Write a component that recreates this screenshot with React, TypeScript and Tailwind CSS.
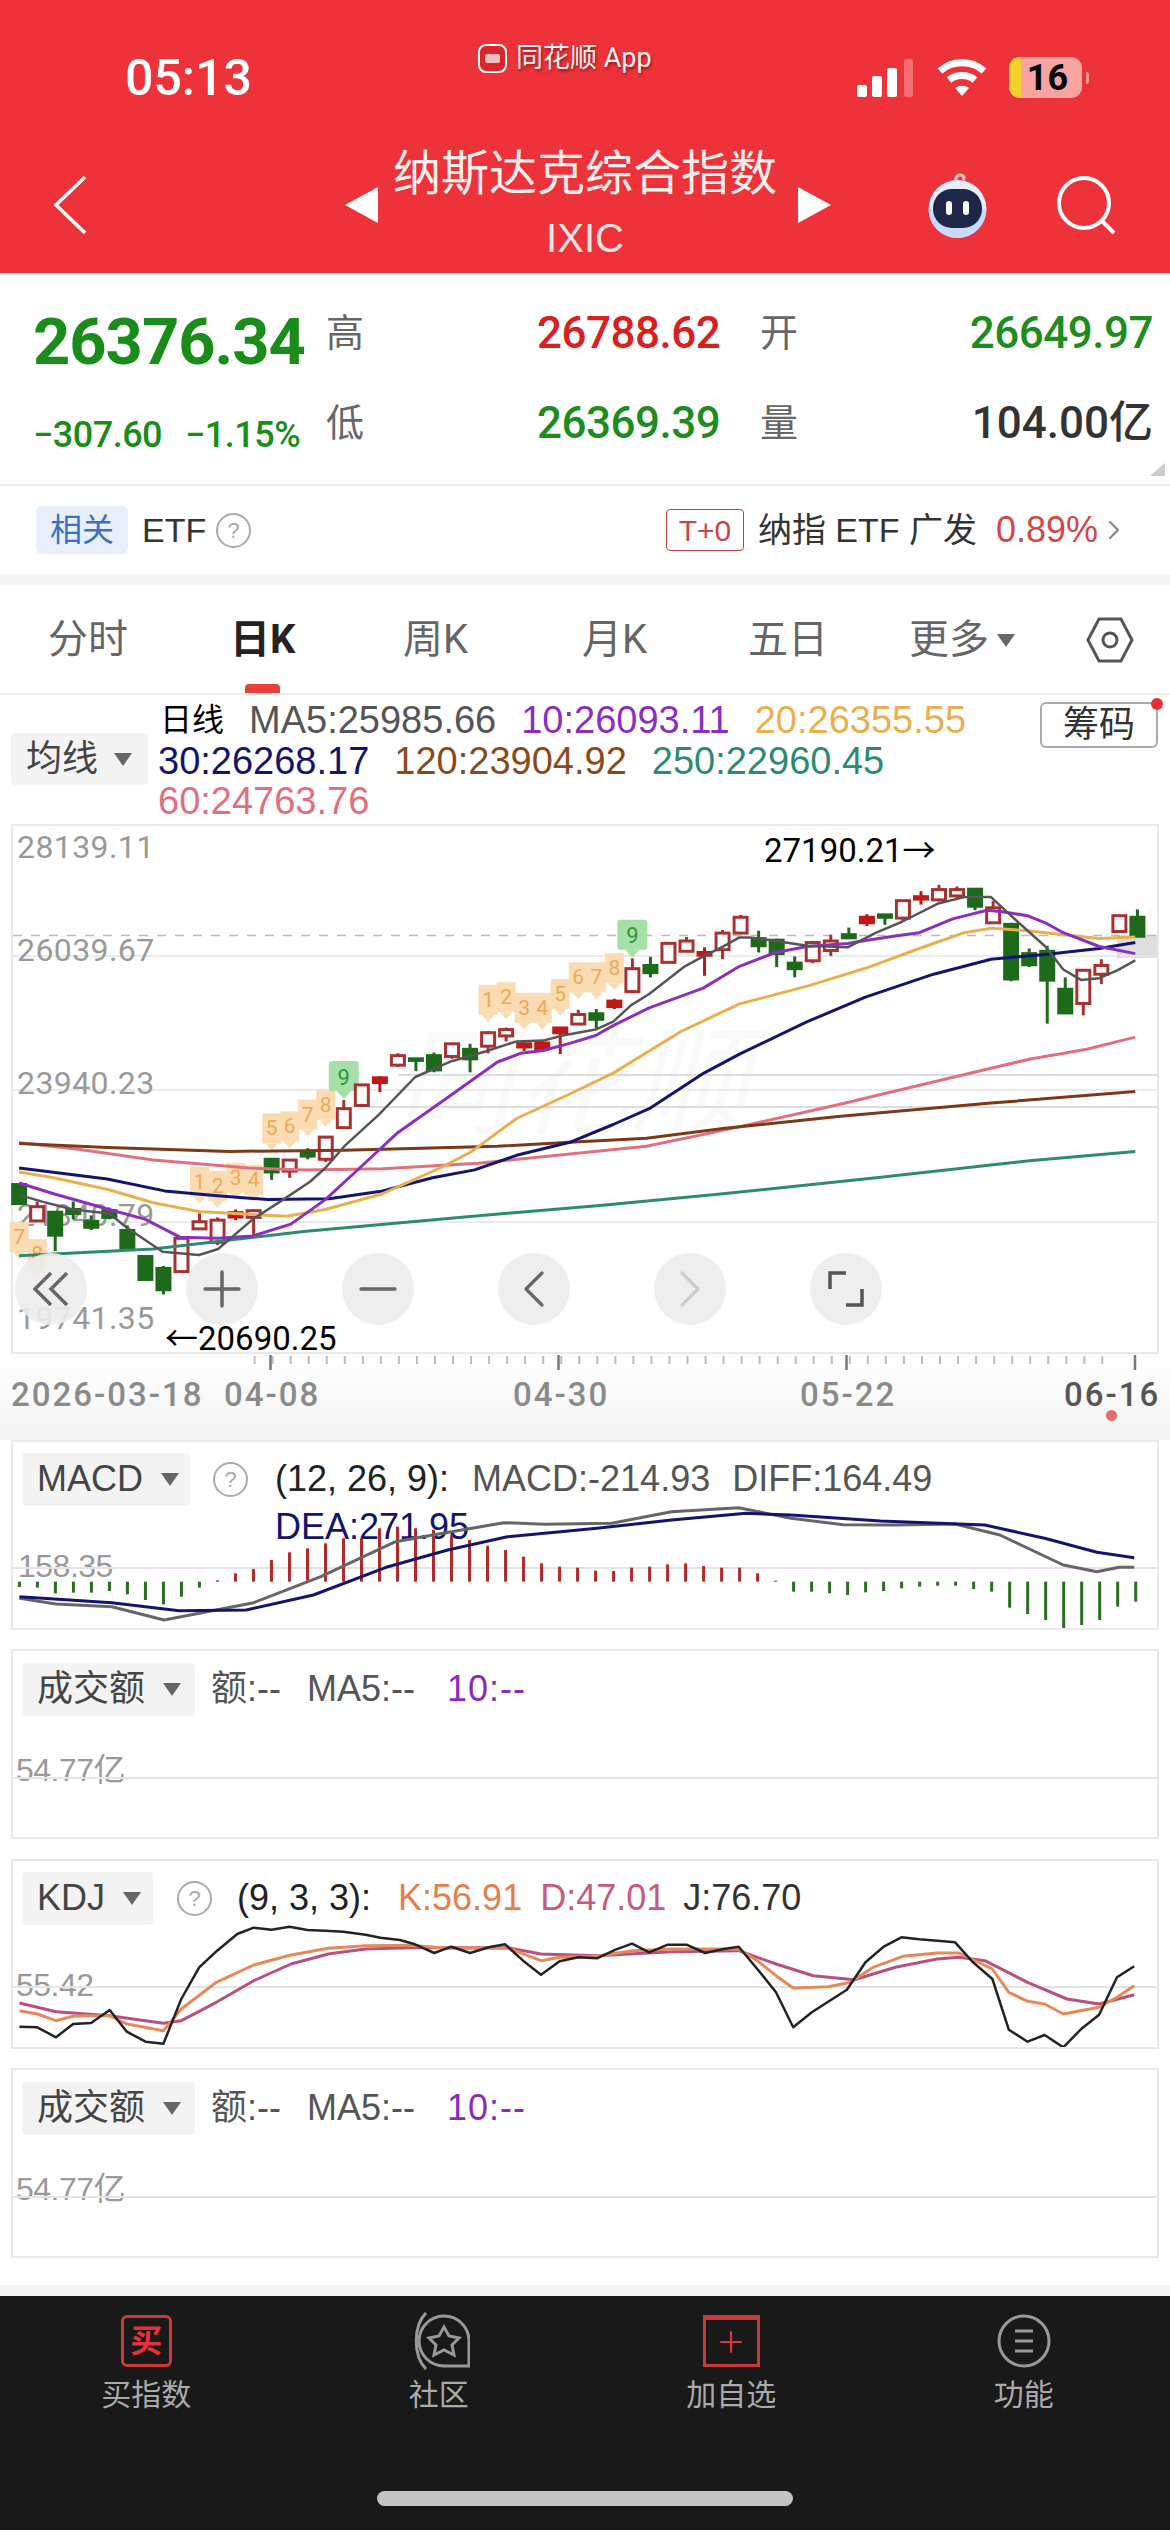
import { ChevronLeft, ChevronRight, Minus, Plus } from "lucide-react";
import type { ReactNode } from "react";

const sans = "font-['Liberation_Sans','Noto_Sans_CJK_SC',sans-serif]";

// chart coords below were read off crops of the screenshot, so map them back to page px
const SCALE_MAIN_X = 2.613;
const SCALE_MAIN_Y = 2.529;
const SCALE_X = 1.3402;

const mapLeft = (s: string) =>
  s
    .split(" ")
    .map((p) => {
      const [x, y] = p.split(",").map(Number);
      return `${(x / SCALE_MAIN_X).toFixed(1)},${(820 + y / SCALE_MAIN_Y).toFixed(1)}`;
    })
    .join(" ");

const mapRight = (s: string) =>
  s
    .split(" ")
    .map((p) => {
      const [x, y] = p.split(",").map(Number);
      return `${(570 + x / SCALE_MAIN_X).toFixed(1)},${(820 + y / SCALE_MAIN_Y).toFixed(1)}`;
    })
    .join(" ");

const mapPanel = (s: string, originY: number) =>
  s
    .split(" ")
    .map((p) => {
      const [x, y] = p.split(",").map(Number);
      return `${(x / SCALE_X).toFixed(1)},${(originY + y / 3).toFixed(1)}`;
    })
    .join(" ");

const mainLines = [
  {
    color: "#2e8b73",
    w: 3,
    a: "50,1102 400,1085 800,1040 1200,1005 1568,975",
    b: "400,945 800,905 1200,862 1477,838",
  },
  {
    color: "#e07080",
    w: 3,
    a: "50,816 200,832 400,860 650,880 800,885 1000,882 1250,868 1489,845",
    b: "200,825 400,785 700,720 1100,628 1200,605 1350,580 1477,549",
  },
  {
    color: "#7a3a1a",
    w: 3,
    a: "50,818 280,828 600,838 900,835 1300,825 1489,815",
    b: "200,805 400,780 700,750 1100,716 1477,687",
  },
  {
    color: "#14146e",
    w: 3,
    a: "50,880 280,908 430,938 560,950 700,960 860,958 1000,938 1130,905 1240,885 1350,848 1489,815",
    b: "113,770 207,730 350,640 443,592 620,510 772,448 950,390 1100,352 1242,340 1383,325 1477,310",
  },
  {
    color: "#e8b050",
    w: 3,
    a: "50,890 140,905 285,935 400,968 520,990 660,998 750,1002 850,985 1000,945 1150,880 1230,840 1350,755 1489,693",
    b: "113,640 290,535 443,465 620,420 772,375 913,325 1030,285 1100,274 1195,280 1289,290 1383,300 1477,296",
  },
  {
    color: "#8a2fc0",
    w: 3,
    a: "50,918 140,945 285,985 380,1010 470,1055 570,1058 660,1052 760,1022 850,960 940,880 1040,790 1180,695 1300,612 1360,590 1420,583 1489,565",
    b: "67,545 113,520 207,475 348,425 443,370 537,335 620,320 725,312 772,305 850,293 913,285 1000,250 1090,228 1130,232 1195,242 1242,260 1289,285 1383,320 1477,338",
  },
  {
    color: "#555555",
    w: 2.5,
    a: "50,948 110,965 190,985 285,995 330,1030 425,1092 520,1100 570,1085 660,1010 740,960 810,915 850,880 900,825 990,745 1085,650 1180,610 1270,585 1350,560 1420,558 1470,545",
    b: "67,530 113,510 160,468 207,440 300,370 348,345 396,322 443,297 470,297 537,306 620,318 725,322 800,285 866,258 960,212 1030,195 1100,195 1150,240 1242,320 1289,378 1336,405 1383,400 1430,380 1477,355",
  },
];

// i, high, bodyTop, bodyBottom, low, r/g
const candles: [number, number, number, number, number, "r" | "g"][] = [
  [0, 922, 922, 970, 970, "g"],
  [1, 965, 978, 1014, 1016, "r"],
  [2, 992, 992, 1050, 1090, "g"],
  [3, 965, 985, 995, 1010, "g"],
  [4, 1000, 1015, 1030, 1037, "g"],
  [5, 980, 988, 1005, 1010, "g"],
  [6, 1025, 1038, 1085, 1088, "g"],
  [7, 1104, 1104, 1162, 1164, "g"],
  [8, 1128, 1134, 1188, 1200, "g"],
  [9, 1058, 1058, 1142, 1144, "r"],
  [10, 995, 1016, 1034, 1034, "r"],
  [11, 1005, 1012, 1068, 1075, "r"],
  [12, 985, 993, 1004, 1012, "r"],
  [13, 985, 988, 1005, 1050, "r"],
  [14, 855, 858, 890, 910, "g"],
  [15, 858, 860, 888, 905, "r"],
  [16, 830, 840, 850, 858, "g"],
  [17, 800, 802, 858, 865, "r"],
  [18, 708, 730, 778, 780, "r"],
  [19, 670, 670, 722, 724, "r"],
  [20, 648, 652, 664, 688, "r"],
  [21, 590, 596, 620, 625, "r"],
  [22, 604, 604, 608, 635, "g"],
  [23, 588, 596, 632, 638, "g"],
  [24, 564, 566, 598, 604, "r"],
  [25, 566, 580, 604, 638, "g"],
  [26, 534, 538, 572, 590, "r"],
  [27, 525, 530, 546, 560, "r"],
  [28, 562, 566, 574, 584, "r"],
  [29, 560, 564, 578, 585, "r"],
  [30, 524, 526, 538, 592, "r"],
  [31, 480, 492, 516, 516, "r"],
  [32, 478, 490, 504, 526, "g"],
  [33, 452, 458, 472, 478, "r"],
  [34, 350, 376, 434, 438, "r"],
  [35, 346, 368, 386, 398, "g"],
  [36, 312, 312, 360, 362, "r"],
  [37, 296, 306, 332, 332, "r"],
  [38, 322, 335, 342, 394, "r"],
  [39, 278, 286, 328, 352, "r"],
  [40, 240, 246, 286, 286, "r"],
  [41, 280, 300, 318, 335, "g"],
  [42, 300, 304, 338, 372, "g"],
  [43, 345, 362, 376, 398, "g"],
  [44, 306, 310, 356, 362, "r"],
  [45, 290, 306, 330, 344, "r"],
  [46, 272, 290, 298, 300, "g"],
  [47, 238, 246, 260, 268, "r"],
  [48, 240, 240, 246, 265, "g"],
  [49, 204, 204, 248, 258, "r"],
  [50, 180, 194, 200, 214, "r"],
  [51, 164, 176, 202, 206, "r"],
  [52, 168, 176, 192, 198, "r"],
  [53, 172, 175, 218, 228, "g"],
  [54, 205, 222, 260, 262, "r"],
  [55, 260, 264, 402, 408, "g"],
  [56, 325, 338, 366, 372, "g"],
  [57, 318, 332, 405, 515, "g"],
  [58, 398, 428, 488, 490, "g"],
  [59, 378, 380, 464, 494, "r"],
  [60, 352, 368, 390, 415, "r"],
  [61, 242, 242, 282, 284, "r"],
  [62, 226, 246, 294, 296, "g"],
];

// TD sequence markers: i, y of the digit, digit
const tdMarks: [number, number, string][] = [
  [0, 1055, "7"],
  [1, 1098, "8"],
  [10, 915, "1"],
  [11, 925, "2"],
  [12, 905, "3"],
  [13, 910, "4"],
  [14, 780, "5"],
  [15, 775, "6"],
  [16, 745, "7"],
  [17, 720, "8"],
  [26, 455, "1"],
  [27, 448, "2"],
  [28, 475, "3"],
  [29, 475, "4"],
  [30, 440, "5"],
  [31, 398, "6"],
  [32, 398, "7"],
  [33, 375, "8"],
];

const cx = (i: number) => (50 + 47.13 * i) / SCALE_MAIN_X;
const zy = (y: number) => 820 + y / SCALE_MAIN_Y;

const macdBars = [
  -16, -18, -35, -33, -33, -28, -38, -55, -68, -45, -18, 4, 25, 38, 65, 88, 100, 115, 130, 130, 160, 165, 160, 155, 140,
  125, 108, 95, 75, 55, 45, 42, 33, 32, 42, 45, 52, 55, 47, 42, 42, 25, 3, -30, -30, -35, -40, -32, -28, -20, -15, -12,
  -12, -22, -30, -78, -97, -115, -140, -130, -115, -75, -60,
];

const yLabels: [number, string][] = [
  [847, "28139.11"],
  [950, "26039.67"],
  [1083, "23940.23"],
  [1215, "21840.79"],
  [1318, "19741.35"],
];

const Caret = ({ className = "" }: { className?: string }) => (
  <svg width="18" height="13" viewBox="0 0 18 13" className={className}>
    <path d="M0 0h18L9 13z" fill="#666" />
  </svg>
);

const Help = () => (
  <span className="flex h-[35px] w-[35px] items-center justify-center rounded-full border-2 border-[#aaaaaa] text-[22px] text-[#aaaaaa]">
    ?
  </span>
);

const MainChart = () => (
  <svg width="1144" height="528" viewBox="13 826 1144 528" className="block overflow-visible">
    <text x="395" y="1125" fontSize="118" fontStyle="italic" fill="#f9f9f9" className="font-['Noto_Sans_CJK_SC']">
      同花顺
    </text>
    <rect x="1117" y="935" width="40" height="23" fill="#dedede" />
    <line x1="398" x2="1157" y1="1075" y2="1075" stroke="#dddddd" strokeWidth="2" />
    <line x1="368" x2="1157" y1="1107" y2="1107" stroke="#dddddd" strokeWidth="2" />
    {[956, 1090, 1222].map((y) => (
      <line key={y} x1="13" x2="1157" y1={y} y2={y} stroke="#e4e4e4" strokeWidth="1.5" />
    ))}
    <line x1="13" x2="1157" y1="935.5" y2="935.5" stroke="#bbbbbb" strokeWidth="1.5" strokeDasharray="9 9" />
    <line x1="13" x2="1157" y1="1353" y2="1353" stroke="#e8e8e8" strokeWidth="2" />
    {yLabels.map(([y, label]) => (
      <text key={label} x="17" y={y} dominantBaseline="central" fontSize="32" letterSpacing="0.4" fill="#999999">
        {label}
      </text>
    ))}

    {tdMarks.map(([i, y, digit]) => (
      <g key={`${i}-${digit}`}>
        <rect x={cx(i) - 9.5} y={zy(y) - 15} width="19" height="30" fill="#fbdcb2" />
        <path d={`M${cx(i) - 6} ${zy(y) + 15}h12l-6 7z`} fill="#fbdcb2" />
      </g>
    ))}
    {tdMarks.map(([i, y, digit]) => (
      <text
        key={`t${i}-${digit}`}
        x={cx(i)}
        y={zy(y)}
        textAnchor="middle"
        dominantBaseline="central"
        fontSize="21"
        fill="#eaa956"
      >
        {digit}
      </text>
    ))}
    {[
      [18, 650],
      [34, 293],
    ].map(([i, y]) => (
      <g key={i}>
        <rect x={cx(i) - 15} y={zy(y) - 16} width="30" height="30" rx="3" fill="#a6e0a6" />
        <path d={`M${cx(i) - 7} ${zy(y) + 14}h14l-7 8z`} fill="#a6e0a6" />
        <text x={cx(i)} y={zy(y)} textAnchor="middle" dominantBaseline="central" fontSize="22" fill="#2a9a3a">
          9
        </text>
      </g>
    ))}

    {candles.map(([i, high, top, bottom, low, dir]) => {
      const x = cx(i);
      const h = zy(bottom) - zy(top);
      const color = dir === "r" ? (h < 6 ? "#c01818" : "#a83232") : "#1d6a1a";
      const solid = dir === "g" || h < 6;
      return (
        <g key={i}>
          <line x1={x} x2={x} y1={zy(high)} y2={zy(low)} stroke={color} strokeWidth="3" />
          <rect
            x={x - 6.5}
            y={zy(top)}
            width="13"
            height={h}
            fill={solid ? color : "#ffffff"}
            stroke={color}
            strokeWidth="3"
          />
        </g>
      );
    })}

    {mainLines.map((l) => (
      <polyline
        key={l.color}
        points={`${mapLeft(l.a)} ${mapRight(l.b)}`}
        fill="none"
        stroke={l.color}
        strokeWidth={l.w}
        strokeLinejoin="round"
      />
    ))}

    <text x="165" y="1338" dominantBaseline="central" fontSize="33" fill="#000000">
      ←20690.25
    </text>
    <text x="764" y="850" dominantBaseline="central" fontSize="33" fill="#000000">
      27190.21→
    </text>
  </svg>
);

const ChartButton = ({ children, className = "" }: { children?: ReactNode; className?: string }) => (
  <div className={`flex h-[72px] w-[72px] items-center justify-center rounded-full bg-[#ececec]/90 ${className}`}>
    {children}
  </div>
);

const ChartControls = () => (
  <div className="absolute left-[2px] top-[427px] flex gap-[84px]">
    <ChartButton className="mr-[15px]">
      <svg width="36" height="34" viewBox="0 0 36 34" fill="none" stroke="#666" strokeWidth="3.5">
        <path d="M18 1 2 17l16 16M34 1 18 17l16 16" />
      </svg>
    </ChartButton>
    <ChartButton>
      <Plus size={58} strokeWidth={1.45} color="#666" />
    </ChartButton>
    <ChartButton>
      <Minus size={58} strokeWidth={1.45} color="#666" />
    </ChartButton>
    <ChartButton>
      <ChevronLeft size={64} strokeWidth={1.2} color="#666" />
    </ChartButton>
    <ChartButton>
      <ChevronRight size={64} strokeWidth={1.2} color="#cccccc" />
    </ChartButton>
    <ChartButton>
      <svg width="36" height="36" viewBox="0 0 36 36" fill="none" stroke="#555" strokeWidth="3.5">
        <path d="M2 18V2h16M34 18v16H18" />
      </svg>
    </ChartButton>
  </div>
);

const DateAxis = () => {
  const ticks = Array.from({ length: 48 }, (_, k) => 13 + k);
  return (
    <div className="h-[86px] bg-gradient-to-b from-white to-[#f3f3f3]">
      <svg width="1170" height="22" viewBox="0 1354 1170 22" className="block">
        {ticks.map((i) => (
          <line key={i} x1={cx(i) + 1} x2={cx(i) + 1} y1="1356" y2="1364" stroke="#bbbbbb" strokeWidth="2" />
        ))}
        {[270.5, 558.5, 846.5, 1135].map((x) => (
          <line key={x} x1={x} x2={x} y1="1355" y2="1370" stroke="#777777" strokeWidth="2.5" />
        ))}
      </svg>
      <div className="flex h-[38px] items-center text-[33px] font-medium tracking-[2px] text-[#8a8a8a]">
        <span className="ml-[11px] w-[213px] whitespace-nowrap">2026-03-18</span>
        <span className="w-[289px]">04-08</span>
        <span className="w-[287px]">04-30</span>
        <span className="w-[264px]">05-22</span>
        <span className="text-[#555555]">06-16</span>
      </div>
      <div className="-mt-[4px] ml-[1106px] h-[11px] w-[11px] rounded-full bg-[#e86a6a]" />
    </div>
  );
};

const Panel = ({ svgBox, lines, children }: { svgBox: string; lines?: ReactNode; children: ReactNode }) => (
  <section className="relative mx-[11px] h-[190px] border-2 border-[#e8e8e8]">
    {children}
    {lines && (
      <svg width="1144" height="186" viewBox={svgBox} className="absolute inset-0">
        {lines}
      </svg>
    )}
  </section>
);

const Chip = ({ label, className }: { label: string; className: string }) => (
  <div className={`flex h-[53px] items-center rounded-[4px] bg-[#f3f3f3] pl-[15px] text-[36px] text-[#444444] ${className}`}>
    <span>{label}</span>
    <Caret className="ml-[18px]" />
  </div>
);

const VolumePanel = ({ originY }: { originY: number }) => (
  <Panel
    svgBox={`13 ${originY} 1144 186`}
    lines={<line x1="13" x2="1157" y1={originY + 127} y2={originY + 127} stroke="#e4e4e4" strokeWidth="2" />}
  >
    <div className={`flex items-center pl-[9px] pt-[11px] ${sans}`}>
      <Chip label="成交额" className="w-[173px]" />
      <span className="ml-[16px] text-[36px] text-[#555555]">额:--</span>
      <span className="ml-[26px] text-[36px] text-[#555555]">MA5:--</span>
      <span className="ml-[32px] text-[36px] tracking-[1px] text-[#8a2bc0]">10:--</span>
    </div>
    <div className={`mt-[30px] pl-[3px] text-[32px] tracking-[-0.5px] text-[#999999] ${sans}`}>54.77亿</div>
  </Panel>
);

const macdDiff =
  "26,535 75,552 150,560 220,600 340,548 430,470 530,365 580,345 675,308 730,313 820,310 900,275 990,263 1060,295 1130,314 1200,315 1280,312 1340,345 1425,435 1470,455 1500,442 1520,442";
const macdDea =
  "26,530 150,548 240,572 330,570 420,525 520,440 600,390 680,350 800,325 900,300 1000,280 1060,285 1180,303 1320,315 1400,355 1470,397 1520,413";

const kdjJ =
  "26,563 50,565 75,595 98,555 122,552 147,513 170,578 195,608 219,614 243,480 267,385 291,335 318,285 340,266 364,272 388,263 412,273 436,275 460,278 490,287 510,296 536,303 556,316 582,342 605,323 630,342 655,325 677,316 701,365 725,407 750,367 775,355 800,358 825,332 847,314 870,340 895,317 920,317 945,342 970,330 990,323 1015,390 1040,460 1063,565 1088,520 1135,452 1160,370 1185,322 1208,295 1232,301 1256,305 1280,310 1304,370 1330,420 1352,572 1377,608 1400,588 1425,625 1449,570 1473,527 1497,415 1520,382";
const kdjK =
  "26,515 50,525 75,545 98,532 122,530 147,530 170,555 219,575 243,510 290,430 340,378 390,348 440,328 490,320 550,319 600,328 680,327 725,365 750,355 800,352 847,335 900,330 990,330 1015,365 1040,410 1063,447 1110,443 1140,430 1170,385 1210,352 1256,342 1285,342 1330,390 1352,460 1377,487 1400,495 1425,525 1473,505 1497,475 1520,440";
const kdjD =
  "26,492 75,518 147,530 219,553 243,545 290,490 340,425 390,375 440,345 490,330 550,326 680,326 725,345 800,350 900,338 990,335 1040,375 1090,410 1145,422 1200,385 1256,360 1285,355 1320,365 1377,430 1430,480 1473,495 1520,467";

const MacdPanel = () => (
  <Panel
    svgBox="13 1442 1144 186"
    lines={
      <>
        <line x1="13" x2="1157" y1="1568" y2="1568" stroke="#e4e4e4" strokeWidth="2" />
        {macdBars.map((v, i) => {
          const x = (26 + 24.13 * i) / SCALE_X;
          const zero = 1420 + 485 / 3;
          return (
            <line
              key={i}
              x1={x}
              x2={x}
              y1={zero}
              y2={zero - v / 3}
              stroke={v > 0 ? "#b22a2a" : "#2a6e1f"}
              strokeWidth="3"
            />
          );
        })}
        <polyline points={mapPanel(macdDiff, 1420)} fill="none" stroke="#666666" strokeWidth="3" strokeLinejoin="round" />
        <polyline points={mapPanel(macdDea, 1420)} fill="none" stroke="#14146e" strokeWidth="3" strokeLinejoin="round" />
      </>
    }
  >
    <div className={`flex items-center pl-[9px] pt-[10px] ${sans}`}>
      <Chip label="MACD" className="w-[168px]" />
      <span className="ml-[23px]">
        <Help />
      </span>
      <span className="ml-[27px] text-[36px] text-[#222222]">(12, 26, 9):</span>
      <span className="ml-[23px] text-[36px] text-[#555555]">MACD:-214.93</span>
      <span className="ml-[22px] text-[36px] text-[#555555]">DIFF:164.49</span>
    </div>
    <div className={`ml-[262px] mt-[1px] text-[36px] leading-[40px] text-[#14146e] ${sans}`}>DEA:271.95</div>
    <div className={`absolute left-[5px] top-[100px] text-[32px] tracking-[-0.5px] text-[#999999] ${sans}`}>158.35</div>
  </Panel>
);

const KdjPanel = () => (
  <Panel
    svgBox="13 1862 1144 186"
    lines={
      <>
        <line x1="13" x2="1157" y1="1988" y2="1988" stroke="#e4e4e4" strokeWidth="2" />
        <polyline points={mapPanel(kdjD, 1840)} fill="none" stroke="#b85080" strokeWidth="3" strokeLinejoin="round" />
        <polyline points={mapPanel(kdjK, 1840)} fill="none" stroke="#e58a5a" strokeWidth="3" strokeLinejoin="round" />
        <polyline points={mapPanel(kdjJ, 1840)} fill="none" stroke="#222222" strokeWidth="2.5" strokeLinejoin="round" />
      </>
    }
  >
    <div className={`flex items-center pl-[9px] pt-[10px] ${sans}`}>
      <Chip label="KDJ" className="w-[131px]" />
      <span className="ml-[24px]">
        <Help />
      </span>
      <span className="ml-[25px] text-[36px] text-[#222222]">(9, 3, 3):</span>
      <span className="ml-[27px] text-[36px] text-[#e57f50]">K:56.91</span>
      <span className="ml-[18px] text-[36px] text-[#c85a80]">D:47.01</span>
      <span className="ml-[17px] text-[36px] text-[#333333]">J:76.70</span>
    </div>
    <div className={`absolute left-[3px] top-[100px] text-[32px] tracking-[-0.5px] text-[#999999] ${sans}`}>55.42</div>
  </Panel>
);

const Robot = () => (
  <svg width="71" height="66" viewBox="0 0 71 66">
    <path d="M34 12c-1-5 0-9 4-9s5 3 3 5" fill="none" stroke="#f6c6c6" strokeWidth="3" />
    <circle cx="35.5" cy="37" r="29" fill="#e8edff" />
    <path d="M6.5 37a29 29 0 0 0 58 0z" fill="#bcd0ff" opacity="0.7" />
    <rect x="11" y="17" width="49" height="39" rx="19" fill="#1e2748" />
    <rect x="24" y="29" width="6" height="14" rx="3" fill="#ffffff" />
    <rect x="41" y="29" width="6" height="14" rx="3" fill="#ffffff" />
  </svg>
);

const StatusBar = () => (
  <div className="flex h-[137px] items-start pl-[125px] pt-[48px] text-white">
    <div className="w-[353px] text-[50px] font-medium leading-[60px]">05:13</div>
    <div className="-mt-[20px] flex h-[60px] w-[379px] items-center">
      <span className="flex h-[29px] w-[29px] items-center justify-center rounded-[8px] border-2 border-white bg-[#d9252b]">
        <span className="h-[9px] w-[15px] rounded-[2px] bg-white/70" />
      </span>
      <span className="ml-[9px] text-[27px] text-[#f3f3f3] [text-shadow:1px_2px_3px_rgba(90,0,0,0.6)]">同花顺 App</span>
    </div>
    <svg width="57" height="38" viewBox="0 0 57 38" className="mt-[11px]">
      <rect x="0" y="26" width="10" height="12" rx="2" fill="#ffffff" />
      <rect x="15" y="17" width="10" height="21" rx="2" fill="#ffffff" />
      <rect x="30" y="9" width="10" height="29" rx="2" fill="#ffffff" />
      <rect x="47" y="0" width="9" height="38" rx="2" fill="#ffffff" opacity="0.3" />
    </svg>
    <svg width="50" height="38" viewBox="0 0 50 38" fill="none" stroke="#ffffff" strokeWidth="7" className="ml-[23px] mt-[11px]">
      <path d="M3 12c12-11 32-11 44 0" />
      <path d="M12 21c7-6 19-6 26 0" />
      <path d="M25 37l-7-8c4-3 10-3 14 0z" fill="#ffffff" stroke="none" />
    </svg>
    <div className="relative ml-[22px] mt-[9px] flex h-[41px] w-[73px] items-center justify-center overflow-hidden rounded-[11px] bg-[#f9a3a3] text-[36px] font-bold leading-none text-black">
      <span className="absolute left-0 top-0 h-full w-[12px] bg-[#f5cf2c]" />
      <span className="relative ml-[4px]">16</span>
    </div>
    <div className="ml-[4px] mt-[24px] h-[12px] w-[3px] rounded-r bg-white/50" />
  </div>
);

const NavBar = () => (
  <div className="flex h-[136px] items-center pl-[54px] text-white">
    <svg width="32" height="58" viewBox="0 0 32 58" fill="none" stroke="#ffffff" strokeWidth="3.5">
      <path d="M31 1 2 29l29 28" />
    </svg>
    <svg width="33" height="36" viewBox="0 0 33 36" className="ml-[259px]">
      <path d="M33 0v36L0 18z" fill="#ffffff" />
    </svg>
    <div className="ml-[16px] mt-[2px] flex w-[382px] flex-col items-center">
      <span className="whitespace-nowrap text-[48px] leading-[64px] text-[#fdeeee]">纳斯达克综合指数</span>
      <span className={`text-[40px] leading-[64px] text-[#fde4e4] ${sans}`}>IXIC</span>
    </div>
    <svg width="33" height="36" viewBox="0 0 33 36" className="ml-[22px]">
      <path d="M0 0v36l33-18z" fill="#ffffff" />
    </svg>
    <div className="ml-[91px]">
      <Robot />
    </div>
    <svg width="60" height="58" viewBox="0 0 60 58" fill="none" stroke="#ffffff" strokeWidth="4" className="ml-[63px]">
      <circle cx="28" cy="27" r="25" />
      <path d="M46 45l12 12" />
    </svg>
  </div>
);

const QuoteGrid = () => (
  <section className="relative flex h-[211px] bg-white">
    <div className="w-[326px] pl-[33px] pt-[34px] text-[#1a8c1a]">
      <div className="text-[65px] font-bold leading-[70px] tracking-[-1px]">26376.34</div>
      <div className="mt-[38px] flex text-[36px] font-medium leading-[40px] tracking-[-0.5px]">
        <span className="w-[152px]">−307.60</span>
        <span>−1.15%</span>
      </div>
    </div>
    <div className="grid w-[434px] grid-cols-[211px_1fr] grid-rows-[90px_90px] items-center pt-[15px] text-[38px] text-[#666666]">
      <span>高</span>
      <span className="text-[44px] font-medium tracking-[-0.5px] text-[#d8201f]">26788.62</span>
      <span>低</span>
      <span className="text-[44px] font-medium tracking-[-0.5px] text-[#1f8c1f]">26369.39</span>
    </div>
    <div className="grid w-[393px] grid-cols-[auto_1fr] grid-rows-[90px_90px] items-center pt-[15px] text-[38px] text-[#666666]">
      <span>开</span>
      <span className="text-right text-[44px] font-medium tracking-[-0.5px] text-[#1f8c1f]">26649.97</span>
      <span>量</span>
      <span className="text-right text-[44px] font-medium text-[#333333]">104.00亿</span>
    </div>
    <svg width="15" height="13" viewBox="0 0 15 13" className="absolute bottom-[8px] right-[5px]">
      <path d="M15 0v13H0z" fill="#cccccc" />
    </svg>
  </section>
);

const EtfRow = () => (
  <section className={`flex h-[90px] items-center border-t-2 border-[#eeeeee] bg-white pl-[36px] pr-[40px] ${sans}`}>
    <span className="flex h-[48px] w-[92px] items-center justify-center rounded-[6px] bg-[#e8effa] text-[32px] text-[#3a6fc4]">
      相关
    </span>
    <span className="ml-[14px] text-[34px] text-[#333333]">ETF</span>
    <span className="ml-[10px]">
      <Help />
    </span>
    <span className="ml-auto flex h-[42px] w-[78px] items-center justify-center rounded-[4px] border border-[#c04040] text-[30px] text-[#c44848]">
      T+0
    </span>
    <span className="ml-[14px] w-[238px] text-[34px] text-[#333333]">纳指 ETF 广发</span>
    <span className="text-[36px] text-[#d44848]">0.89%</span>
    <ChevronRight size={32} strokeWidth={1.6} color="#888888" />
  </section>
);

const Tabs = () => (
  <section className="bg-white">
    <div className="flex h-[99px] items-center pl-[48px] pt-[11px] text-[40px] text-[#666666]">
      <span className="w-[182px]">分时</span>
      <span className="w-[173px] font-bold text-[#222222]">日K</span>
      <span className="w-[179px]">周K</span>
      <span className="w-[166px]">月K</span>
      <span className="w-[161px]">五日</span>
      <span className="flex w-[177px] items-center">
        更多
        <Caret className="ml-[8px]" />
      </span>
      <svg width="48" height="46" viewBox="0 0 48 46" fill="none" stroke="#555555" strokeWidth="3">
        <path d="M13 2h22l11 21-11 21H13L2 23z" />
        <circle cx="24" cy="23" r="7" />
      </svg>
    </div>
    <div className="ml-[245px] h-[9px] w-[35px] rounded-t-[4px] bg-[#e8403a]" />
    <div className="h-[2px] bg-[#eeeeee]" />
  </section>
);

const MaLegend = () => (
  <section className={`flex h-[129px] bg-white pl-[11px] ${sans}`}>
    <div className="mt-[38px] flex h-[52px] w-[137px] items-center rounded-[4px] bg-[#f3f3f3] pl-[15px] text-[36px] text-[#444444]">
      均线
      <Caret className="ml-[16px]" />
    </div>
    <div className="ml-[10px] w-[882px] pt-[5px] text-[38px] leading-[40.5px]">
      <div className="flex gap-[25px] whitespace-nowrap">
        <span className="pl-[2px] text-[32px] text-black">日线</span>
        <span className="text-[#555555]">MA5:25985.66</span>
        <span className="text-[#8a2fc0]">10:26093.11</span>
        <span className="text-[#e8b050]">20:26355.55</span>
      </div>
      <div className="flex gap-[25px] whitespace-nowrap">
        <span className="text-[#14146e]">30:26268.17</span>
        <span className="text-[#8a4a20]">120:23904.92</span>
        <span className="text-[#2e8b73]">250:22960.45</span>
      </div>
      <div className="text-[#e07080]">60:24763.76</div>
    </div>
    <div className="relative mt-[7px] flex h-[46px] w-[118px] items-center justify-center rounded-[6px] border-2 border-[#aaaaaa] text-[36px] text-[#333333]">
      筹码
      <span className="absolute -right-[7px] -top-[6px] h-[12px] w-[12px] rounded-full bg-[#e6303a]" />
    </div>
  </section>
);

const navItems = ["买指数", "社区", "加自选", "功能"];

const NavIcon = ({ index }: { index: number }) => {
  if (index === 0) {
    return (
      <span className="flex h-[52px] w-[51px] items-center justify-center rounded-[6px] border-[3px] border-[#c93a3a] text-[32px] font-bold leading-none text-[#e8303a]">
        买
      </span>
    );
  }
  if (index === 1) {
    return (
      <svg width="62" height="58" viewBox="0 0 62 58" fill="none" stroke="#999999" strokeWidth="3">
        <path d="M18 1C5 14 5 44 18 57" />
        <path d="M61 54V28a25 25 0 1 0-25 26z" />
        <path d="M36 15l5 9 10 2-7 7 2 10-10-5-10 5 2-10-7-7 10-2z" />
      </svg>
    );
  }
  if (index === 2) {
    return (
      <span className="flex h-[52px] w-[57px] items-center justify-center border-[3px] border-t-[5px] border-[#c93a3a] text-[#e8303a]">
        <Plus size={34} strokeWidth={1.5} />
      </span>
    );
  }
  return (
    <svg width="54" height="54" viewBox="0 0 54 54" fill="none" stroke="#999999" strokeWidth="3">
      <circle cx="27" cy="27" r="25" />
      <path d="M18 17h18M18 27h18M18 37h18" />
    </svg>
  );
};

const Footer = () => (
  <footer className="h-[234px] bg-[#191919] pt-[19px]">
    <div className="grid grid-cols-4">
      {navItems.map((label, i) => (
        <div key={label} className="flex flex-col items-center">
          <div className="flex h-[52px] items-center">
            <NavIcon index={i} />
          </div>
          <span className="mt-[13px] text-[30px] leading-[30px] text-[#aaaaaa]">{label}</span>
        </div>
      ))}
    </div>
    <div className="ml-[377px] mt-[81px] h-[15px] w-[416px] rounded-full bg-[#c4c4c4]" />
  </footer>
);

export default function App() {
  return (
    <div className="flex h-[2532px] w-[1170px] flex-col overflow-hidden bg-white font-[Roboto,'Noto_Sans_CJK_SC',sans-serif]">
      <header className="h-[273px] bg-[#ee3239]">
        <StatusBar />
        <NavBar />
      </header>
      <QuoteGrid />
      <EtfRow />
      <div className="h-[11px] bg-[#f5f5f5]" />
      <Tabs />
      <MaLegend />

      <section className="relative mx-[11px] h-[530px] border-x-2 border-t-2 border-[#e8e8e8]">
        <MainChart />
        <ChartControls />
      </section>
      <DateAxis />

      <MacdPanel />
      <div className="h-[19px]" />
      <VolumePanel originY={1651} />
      <div className="h-[20px]" />
      <KdjPanel />
      <div className="h-[19px]" />
      <VolumePanel originY={2071} />

      <div className="h-[27px]" />
      <div className="h-[11px] bg-[#f5f5f5]" />
      <Footer />
    </div>
  );
}
